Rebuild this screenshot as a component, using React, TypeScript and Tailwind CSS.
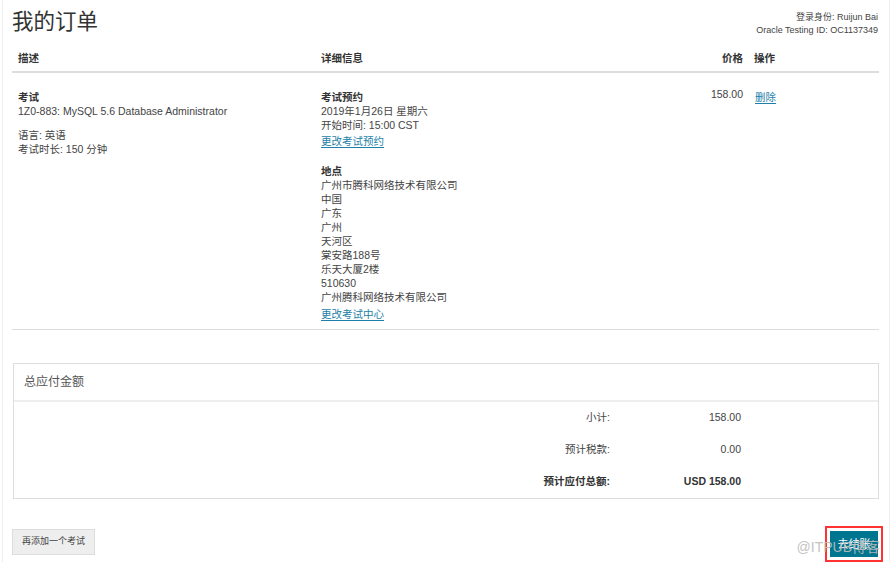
import React from "react";

const font = { fontFamily: '"Liberation Sans", Arial, "Noto Sans CJK SC", sans-serif' };

function Link({ children }: { children: React.ReactNode }) {
  return <a className="text-[#1e7fa8] underline underline-offset-2 cursor-pointer">{children}</a>;
}

export default function App() {
  return (
    <div className="w-[890px] h-[562px] bg-white overflow-hidden text-[#444] text-[10.5px]" style={font}>
      <div className="ml-[2px] w-[888px] h-full border-l border-r border-[#eeeeee] pl-[9px] pr-[10px] relative">
        <div className="flex justify-between items-start h-[47px]">
          <h1 className="text-[21.5px] leading-none pt-[12px] text-[#333]">我的订单</h1>
          <div className="text-right text-[9px] leading-[13px] pt-[11px] pr-[1px] text-[#444]">
            <div>登录身份: Ruijun Bai</div>
            <div>Oracle Testing ID: OC1137349</div>
          </div>
        </div>

        <div className="grid grid-cols-[303px_368px_65px_130px] h-[26px] items-center border-b-2 border-[#dddddd] font-bold text-[#333]">
          <div className="pl-[6px]">描述</div>
          <div className="pl-[6px]">详细信息</div>
          <div className="text-right pr-[5px]">价格</div>
          <div className="pl-[6px]">操作</div>
        </div>

        <div className="grid grid-cols-[303px_368px_65px_130px] border-b border-[#dddddd] pt-[17px] pb-[8px] leading-[14px]">
          <div className="pl-[6px]">
            <div className="font-bold text-[#333]">考试</div>
            <div>1Z0-883: MySQL 5.6 Database Administrator</div>
            <div className="mt-[10px]">语言: 英语</div>
            <div>考试时长: 150 分钟</div>
          </div>
          <div className="pl-[6px]">
            <div className="font-bold text-[#333]">考试预约</div>
            <div>2019年1月26日 星期六</div>
            <div>开始时间: 15:00 CST</div>
            <div className="mt-[2px]"><Link>更改考试预约</Link></div>
            <div className="font-bold text-[#333] mt-[16px]">地点</div>
            <div>广州市腾科网络技术有限公司</div>
            <div>中国</div>
            <div>广东</div>
            <div>广州</div>
            <div>天河区</div>
            <div>棠安路188号</div>
            <div>乐天大厦2楼</div>
            <div>510630</div>
            <div>广州腾科网络技术有限公司</div>
            <div className="mt-[3px]"><Link>更改考试中心</Link></div>
          </div>
          <div className="text-right pr-[5px] -mt-[3px]">158.00</div>
          <div className="pl-[7px]"><Link>删除</Link></div>
        </div>

        <div className="mt-[33px] ml-[1px] border border-[#dddddd]">
          <div className="h-[38px] flex items-center pl-[10px] border-b-2 border-[#eeeeee] text-[12px] text-[#555]">总应付金额</div>
          <div>
            <div className="grid grid-cols-[596px_131px] h-[32px] items-center">
              <div className="text-right">小计:</div>
              <div className="text-right">158.00</div>
            </div>
            <div className="grid grid-cols-[596px_131px] h-[32px] items-center">
              <div className="text-right">预计税款:</div>
              <div className="text-right">0.00</div>
            </div>
            <div className="grid grid-cols-[596px_131px] h-[32px] items-center font-bold text-[#333]">
              <div className="text-right">预计应付总额:</div>
              <div className="text-right">USD 158.00</div>
            </div>
          </div>
        </div>

        <div className="mt-[30px] flex justify-between items-start">
          <button className="h-[26px] px-[9px] bg-[#eeeeee] border border-[#dddddd] text-[9px] text-[#444]">再添加一个考试</button>
          <div className="relative -mt-[3px] -mr-[4px] w-[58px] h-[36px] border-2 border-[#ff3333] p-[3px]">
            <div className="w-full h-[26px] bg-[#00758f] text-white text-[11px] flex items-center justify-center">去结账</div>
          </div>
        </div>
        <div className="absolute right-[9px] bottom-[8px] text-[14px] leading-none text-[#bdbdbd] opacity-90 pointer-events-none" style={{ fontFamily: '"Liberation Sans", "Noto Sans CJK SC", sans-serif' }}>@ITPUB博客</div>
      </div>
    </div>
  );
}
